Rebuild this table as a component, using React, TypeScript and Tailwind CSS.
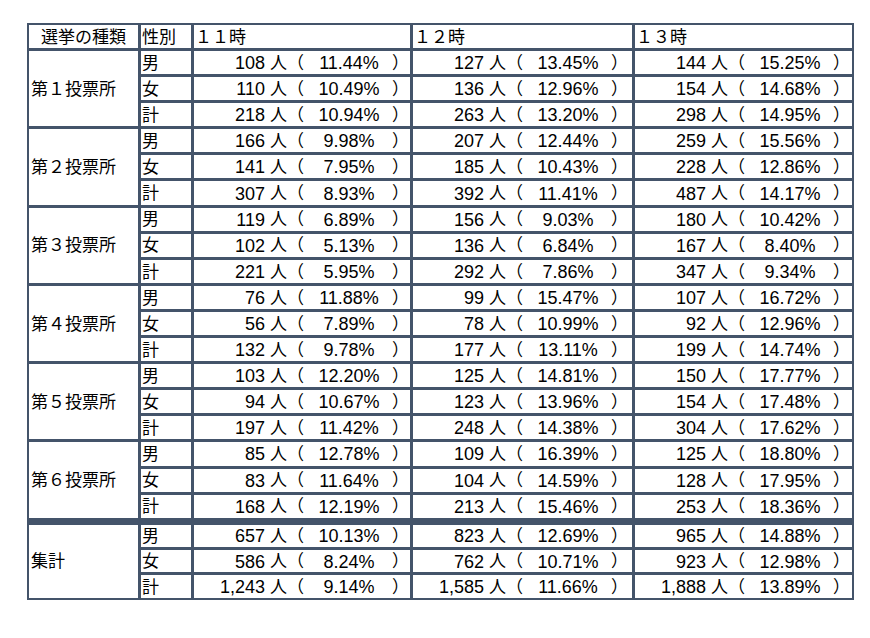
import React from "react";

type Cell = [string, string];
type Group = { name: string; rows: { sex: string; cells: Cell[] }[] };

const groups: Group[] = [
  {
    name: "第１投票所",
    rows: [
      { sex: "男", cells: [["108", "11.44%"], ["127", "13.45%"], ["144", "15.25%"]] },
      { sex: "女", cells: [["110", "10.49%"], ["136", "12.96%"], ["154", "14.68%"]] },
      { sex: "計", cells: [["218", "10.94%"], ["263", "13.20%"], ["298", "14.95%"]] },
    ],
  },
  {
    name: "第２投票所",
    rows: [
      { sex: "男", cells: [["166", "9.98%"], ["207", "12.44%"], ["259", "15.56%"]] },
      { sex: "女", cells: [["141", "7.95%"], ["185", "10.43%"], ["228", "12.86%"]] },
      { sex: "計", cells: [["307", "8.93%"], ["392", "11.41%"], ["487", "14.17%"]] },
    ],
  },
  {
    name: "第３投票所",
    rows: [
      { sex: "男", cells: [["119", "6.89%"], ["156", "9.03%"], ["180", "10.42%"]] },
      { sex: "女", cells: [["102", "5.13%"], ["136", "6.84%"], ["167", "8.40%"]] },
      { sex: "計", cells: [["221", "5.95%"], ["292", "7.86%"], ["347", "9.34%"]] },
    ],
  },
  {
    name: "第４投票所",
    rows: [
      { sex: "男", cells: [["76", "11.88%"], ["99", "15.47%"], ["107", "16.72%"]] },
      { sex: "女", cells: [["56", "7.89%"], ["78", "10.99%"], ["92", "12.96%"]] },
      { sex: "計", cells: [["132", "9.78%"], ["177", "13.11%"], ["199", "14.74%"]] },
    ],
  },
  {
    name: "第５投票所",
    rows: [
      { sex: "男", cells: [["103", "12.20%"], ["125", "14.81%"], ["150", "17.77%"]] },
      { sex: "女", cells: [["94", "10.67%"], ["123", "13.96%"], ["154", "17.48%"]] },
      { sex: "計", cells: [["197", "11.42%"], ["248", "14.38%"], ["304", "17.62%"]] },
    ],
  },
  {
    name: "第６投票所",
    rows: [
      { sex: "男", cells: [["85", "12.78%"], ["109", "16.39%"], ["125", "18.80%"]] },
      { sex: "女", cells: [["83", "11.64%"], ["104", "14.59%"], ["128", "17.95%"]] },
      { sex: "計", cells: [["168", "12.19%"], ["213", "15.46%"], ["253", "18.36%"]] },
    ],
  },
  {
    name: "集計",
    rows: [
      { sex: "男", cells: [["657", "10.13%"], ["823", "12.69%"], ["965", "14.88%"]] },
      { sex: "女", cells: [["586", "8.24%"], ["762", "10.71%"], ["923", "12.98%"]] },
      { sex: "計", cells: [["1,243", "9.14%"], ["1,585", "11.66%"], ["1,888", "13.89%"]] },
    ],
  },
];

const B = "border-[#44546a]";

function bottomClass(gi: number, ri: number) {
  if (gi === 6 && ri === 2) return "border-b-2";
  if (gi === 5 && ri === 2) return "border-b-[7px]";
  return "border-b-[3px]";
}

function DataCell({ n, p, last, bottom, h }: { n: string; p: string; last: boolean; bottom: string; h: string }) {
  return (
    <div className={`${last ? "border-r-2" : "border-r-[3px]"} ${bottom} ${B} flex h-full items-center`}>
      <div className={`flex ${h} items-center whitespace-pre pt-[2px]`}>
        <span className="w-[71px] text-right text-[18px]">{n}</span>
        <span className="ml-[5px]">人</span>
        <span>（</span>
        <span className="ml-[7px] w-[76px] text-center text-[18px]">{p}</span>
        <span className="ml-[5px]">）</span>
      </div>
    </div>
  );
}

export default function App() {
  return (
    <div
      className="min-h-[638px] bg-white pl-[27px] pt-[23px] text-[17px] text-black"
      style={{ fontFamily: '"Liberation Sans", "Noto Sans CJK JP", sans-serif' }}
    >
      <div className={`grid w-fit grid-cols-[112px_53px_219px_222px_219px] border-l-2 border-t-2 ${B}`}>
        {/* header */}
        <div className={`flex h-[26px] items-center justify-center border-b-[3px] border-r-[3px] pt-[2px] ${B}`}>選挙の種類</div>
        <div className={`flex h-[26px] items-center border-b-[3px] border-r-[3px] pl-[1px] pt-[2px] ${B}`}>性別</div>
        <div className={`flex h-[26px] items-center border-b-[3px] border-r-[3px] pl-[1px] pt-[2px] ${B}`}>１１時</div>
        <div className={`flex h-[26px] items-center border-b-[3px] border-r-[3px] pl-[1px] pt-[2px] ${B}`}>１２時</div>
        <div className={`flex h-[26px] items-center border-b-[3px] border-r-2 pl-[1px] pt-[2px] ${B}`}>１３時</div>
        {groups.map((g, gi) => {
          const h = gi === 6 ? "h-[22.3px]" : "h-[23.1px]";
          return (
            <React.Fragment key={g.name}>
              <div className={`row-span-3 flex items-center border-r-[3px] pl-[2px] pt-[2px] ${bottomClass(gi, 2)} ${B}`}>
                {g.name}
              </div>
              {g.rows.map((r, ri) => {
                const bottom = bottomClass(gi, ri);
                return (
                  <React.Fragment key={r.sex}>
                    <div className={`flex h-full items-center border-r-[3px] pl-[1px] ${bottom} ${B}`}>
                      <div className={`flex ${h} items-center pt-[2px]`}>{r.sex}</div>
                    </div>
                    {r.cells.map((c, ci) => (
                      <DataCell key={ci} n={c[0]} p={c[1]} last={ci === 2} bottom={bottom} h={h} />
                    ))}
                  </React.Fragment>
                );
              })}
            </React.Fragment>
          );
        })}
      </div>
    </div>
  );
}
